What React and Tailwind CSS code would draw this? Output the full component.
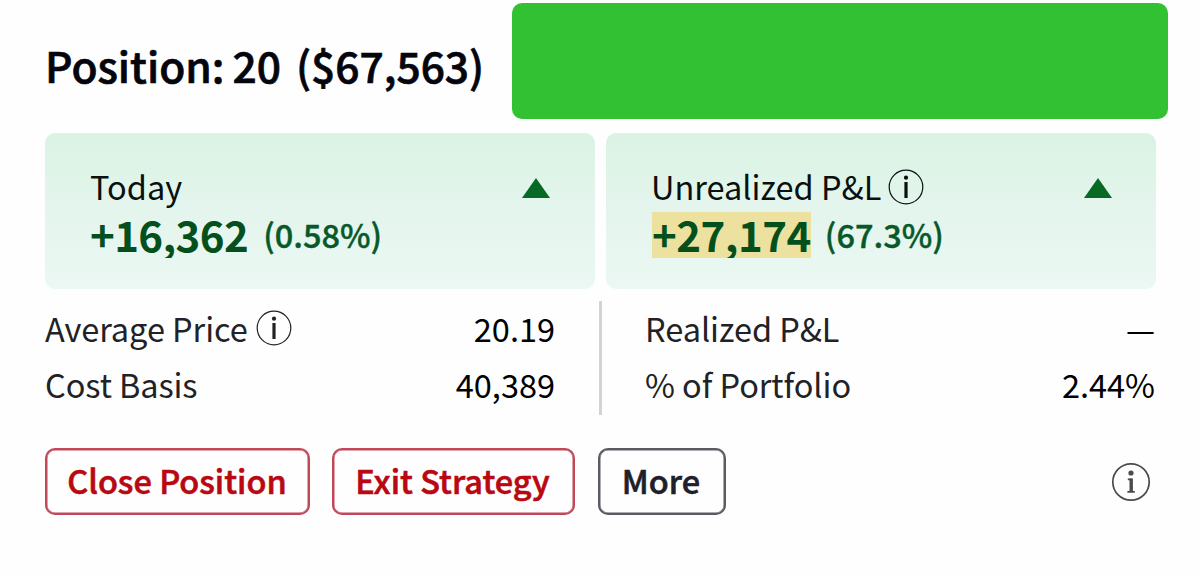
import React from "react";

function InfoGlyph({ className }) {
  return (
    <svg viewBox="0 0 36 36" className={className} fill="none" stroke="currentColor">
      <circle cx="18" cy="18" r="16.8" strokeWidth="1.2" />
      <circle cx="18" cy="8.7" r="2.1" fill="currentColor" stroke="none" />
      <path d="M18 13V29" strokeWidth="3.2" />
    </svg>
  );
}

function InfoButton() {
  return (
    <svg viewBox="0 0 40 40" className="h-10 w-10 text-[#4b4b4f]" fill="none" stroke="currentColor">
      <circle cx="20" cy="20" r="18.2" strokeWidth="1.7" />
      <circle cx="20" cy="11" r="2.6" fill="currentColor" stroke="none" />
      <path d="M20.2 16.4V30" strokeWidth="3.4" />
      <path d="M16.8 17.3H20.4M16.4 29.8H23.8" strokeWidth="1.8" />
    </svg>
  );
}

function Card({ label, info, value, percent, highlight, arrow }) {
  return (
    <div className="flex h-[156px] w-[550px] items-start justify-between rounded-[10px] bg-linear-to-b from-[#daf3e3] via-[#e4f5ed] to-[#ebf8f3] pt-[29px] pl-[45px]">
      <div>
        <div className="flex h-12 items-center text-[32.5px] leading-[48px] text-[#0a0f0f]">
          <span>{label}</span>
          {info && <InfoGlyph className="mt-px ml-[7px] h-9 w-9" />}
        </div>
        <div className="flex items-start pt-[2px]">
          <span className={`h-[46px] overflow-hidden text-[42px] leading-[43px] font-bold text-[#04501c] ${value.cls} ${highlight ? "ml-px bg-[#ede1a0]" : ""}`}>
            {value.text}
          </span>
          <span className={`text-[32.5px] leading-[44px] font-medium text-[#07592a] [-webkit-text-stroke:0.4px_currentColor] ${percent.cls}`}>
            {percent.text}
          </span>
        </div>
      </div>
      <svg viewBox="0 0 28 20" className={`mt-4 h-5 w-7 ${arrow}`}>
        <path d="M14 0L28 20H0Z" fill="#066a24" />
      </svg>
    </div>
  );
}

function Row({ label, info, value, cls }) {
  return (
    <div className="flex h-[56px] items-center justify-between text-[32.5px] leading-[56px]">
      <div className="flex items-center text-[#222226]">
        <span className={cls}>{label}</span>
        {info && <InfoGlyph className="mb-px ml-2 h-9 w-9" />}
      </div>
      <span className="text-black">{value}</span>
    </div>
  );
}

export default function App() {
  return (
    <main className="h-[575px] w-[1200px] overflow-hidden bg-[#fefefe] font-['Noto_Sans_CJK_SC','Noto_Sans',sans-serif] whitespace-nowrap">
      <header className="flex h-[133px] items-start pt-[3px] pl-[45px]">
        <h1 className="w-[467px] pt-8 text-[42.5px] leading-[60px] font-medium text-[#05050d] [-webkit-text-stroke:0.7px_currentColor]">
          <span>Position:</span>
          <span className="ml-2">20</span>
          <span className="ml-[15px]">($67,563)</span>
        </h1>
        <div className="h-[116px] w-[656px] rounded-[10px] bg-[#32c133]" />
      </header>
      <section className="flex gap-[11px] pl-[45px]">
        <Card
          label="Today"
          value={{ text: "+16,362", cls: "tracking-[-0.6px]" }}
          percent={{ text: "(0.58%)", cls: "ml-[15px]" }}
          arrow="mr-[45px]"
        />
        <Card
          info
          highlight
          label="Unrealized P&L"
          value={{ text: "+27,174", cls: "tracking-[-0.5px]" }}
          percent={{ text: "(67.3%)", cls: "ml-[14px]" }}
          arrow="mr-[44px]"
        />
      </section>
      <section className="flex pt-[12px] pl-[45px]">
        <div className="-mt-px w-[510px]">
          <Row label="Average Price" info value="20.19" cls="tracking-[-0.05px]" />
          <Row label="Cost Basis" value="40,389" cls="tracking-[-0.1px]" />
        </div>
        <div className="mr-[43px] ml-[44px] h-[114px] w-[3px] bg-[#d3d3d5]" />
        <div className="-mt-px w-[510px]">
          <Row label="Realized P&L" value="—" cls="tracking-[-0.05px]" />
          <Row label="% of Portfolio" value="2.44%" cls="tracking-[-0.05px]" />
        </div>
      </section>
      <footer className="mt-[33px] flex h-[67px] items-center pr-[49px] pl-[45px] text-[32.5px] font-medium [-webkit-text-stroke:0.6px_currentColor]">
        <button className="h-[67px] w-[265px] rounded-[10px] border-2 border-[#c04858] pr-px pb-[3px] text-[#b90812] shadow-[inset_0_0_0_0.5px_#c04858]">Close Position</button>
        <button className="ml-[22px] h-[67px] w-[243px] rounded-[10px] border-2 border-[#c04858] pr-[2px] pb-[3px] text-[#b90812] shadow-[inset_0_0_0_0.5px_#c04858]">Exit Strategy</button>
        <button className="ml-[23px] h-[67px] w-[128px] rounded-[10px] border-2 border-[#5c5b62] pr-[2px] pb-[3px] text-[#20202a] shadow-[inset_0_0_0_0.5px_#5c5b62]">More</button>
        <div className="ml-auto [-webkit-text-stroke:0]"><InfoButton /></div>
      </footer>
    </main>
  );
}
